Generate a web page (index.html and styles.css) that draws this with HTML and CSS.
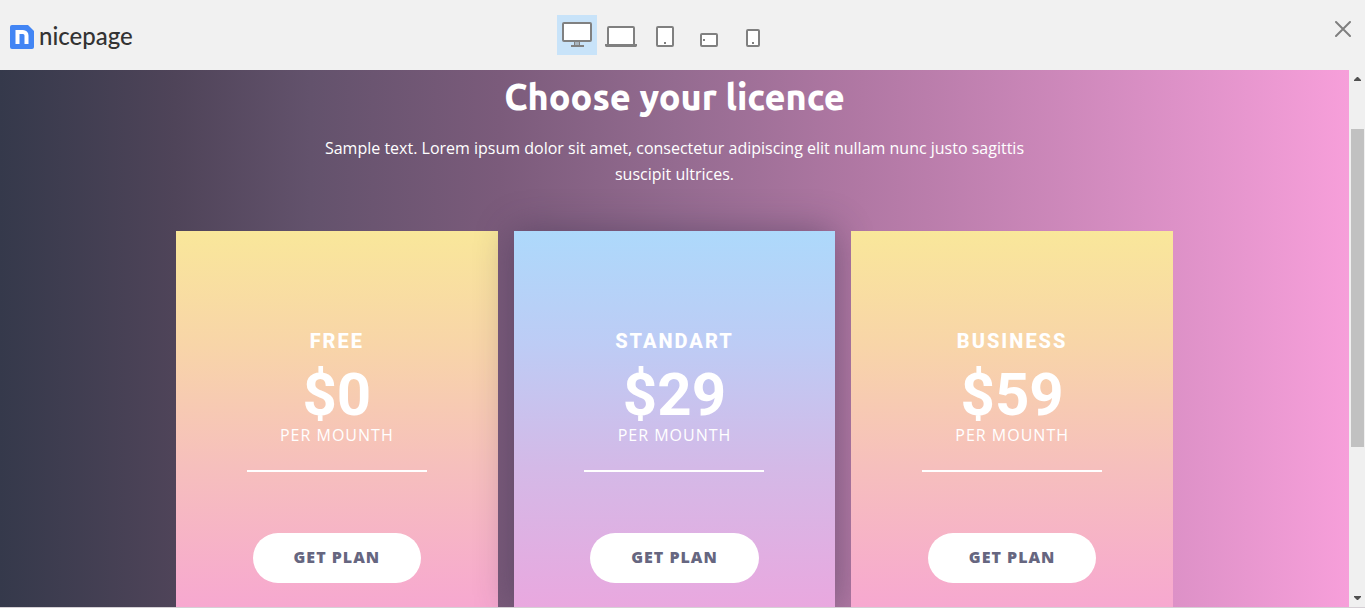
FILE: index.html
```html
<!DOCTYPE html>
<html lang="en">
<head>
<meta charset="utf-8">
<meta name="viewport" content="width=device-width, initial-scale=1">
<title>Nicepage preview</title>
<link rel="stylesheet" href="styles.css">
</head>
<body>
<header class="toolbar">
  <a class="logo" href="#">
    <svg class="logo-mark" width="24" height="24" viewBox="0 0 24 24" aria-hidden="true">
      <path fill="#4285f4" d="M2 0h16l6 6v16a2 2 0 0 1-2 2H2a2 2 0 0 1-2-2V2a2 2 0 0 1 2-2z"/>
      <path fill="none" stroke="#fff" stroke-width="4" d="M7.500 19V6.500M5.500 7H13a3.500 3.500 0 0 1 3.500 3.500V19"/>
    </svg>
    <span class="logo-text">nicepage</span>
  </a>
  <nav class="devices" aria-label="Preview size">
    <button class="device active" type="button" aria-label="Desktop">
      <svg width="40" height="40" viewBox="0 0 40 40"><rect x="6" y="8" width="28" height="18" rx="1" fill="#fff" stroke="#808080" stroke-width="2"/><path fill="#a8b5c0" d="M17 27h6v4h-6z"/><path fill="#808080" d="M17 27h1v3h4v-3h1v3h4v2H14v-2h3z"/></svg>
    </button>
    <button class="device" type="button" aria-label="Laptop">
      <svg width="40" height="40" viewBox="0 0 40 40"><rect x="7" y="12" width="26" height="18" rx="1" fill="#fff" stroke="#808080" stroke-width="2"/><path fill="#808080" d="M4 29h32v2l-1 1H5l-1-1z"/></svg>
    </button>
    <button class="device" type="button" aria-label="Tablet portrait">
      <svg width="40" height="40" viewBox="0 0 40 40"><rect x="12" y="12" width="16" height="19" rx="1" fill="#fff" stroke="#808080" stroke-width="2"/><path fill="#808080" d="M19 27h2v2h-2z"/></svg>
    </button>
    <button class="device" type="button" aria-label="Phone landscape">
      <svg width="40" height="40" viewBox="0 0 40 40"><rect x="12" y="19" width="16" height="12" rx="1" fill="#fff" stroke="#808080" stroke-width="2"/><path fill="#808080" d="M14 24h2v2h-2z"/></svg>
    </button>
    <button class="device" type="button" aria-label="Phone portrait">
      <svg width="40" height="40" viewBox="0 0 40 40"><rect x="14" y="15" width="12" height="16" rx="1" fill="#fff" stroke="#808080" stroke-width="2"/><path fill="#808080" d="M19 27h2v2h-2z"/></svg>
    </button>
  </nav>
  <button class="close" type="button" aria-label="Close">
    <svg width="16" height="16" viewBox="0 0 16 16"><path d="M1 1l14 14M15 1L1 15" stroke="#808080" stroke-width="2" stroke-linecap="round"/></svg>
  </button>
</header>
<div class="preview">
  <main class="page">
    <h1 class="title">Choose your licence</h1>
    <p class="intro">Sample text. Lorem ipsum dolor sit amet, consectetur adipiscing elit nullam nunc justo sagittis suscipit ultrices.</p>
    <div class="plans">
      <section class="plan">
        <h2 class="plan-name">FREE</h2>
        <p class="price">$0</p>
        <p class="period">PER MOUNTH</p>
        <hr class="rule">
        <a class="get" href="#">GET PLAN</a>
      </section>
      <section class="plan featured">
        <h2 class="plan-name">STANDART</h2>
        <p class="price">$29</p>
        <p class="period">PER MOUNTH</p>
        <hr class="rule">
        <a class="get" href="#">GET PLAN</a>
      </section>
      <section class="plan">
        <h2 class="plan-name">BUSINESS</h2>
        <p class="price">$59</p>
        <p class="period">PER MOUNTH</p>
        <hr class="rule">
        <a class="get" href="#">GET PLAN</a>
      </section>
    </div>
  </main>
  <div class="scrollbar" aria-hidden="true">
    <svg width="7" height="4" viewBox="0 0 7 4"><path fill="#505050" d="M3 0h1l3 3v1H0V3z"/></svg>
    <div class="track"><div class="thumb"></div></div>
    <svg width="7" height="4" viewBox="0 0 7 4"><path fill="#505050" d="M0 0h7v1L4 4H3L0 1z"/></svg>
  </div>
</div>
</body>
</html>
```
FILE: styles.css
```css
* { box-sizing: border-box; }
body {
  margin: 0;
  height: 100vh;
  display: flex;
  flex-direction: column;
  overflow: hidden;
  background: #f1f1f1;
  font-family: "Open Sans", sans-serif;
  font-size: 16px;
}
h1, h2, p { margin: 0; }
button { border: 0; padding: 0; background: none; cursor: pointer; }
svg { display: block; }

.toolbar {
  flex: none;
  display: grid;
  grid-template-columns: 1fr auto 1fr;
  align-items: center;
  height: 70px;
  padding: 0 14px 0 10px;
}
.logo {
  display: flex;
  align-items: center;
  gap: 5px;
  padding-top: 4px;
  color: #333;
  text-decoration: none;
}
.logo-text {
  padding-bottom: 2px;
  font: 500 24px/26px Lato, sans-serif;
}
.devices { display: flex; gap: 4px; margin-right: 31px; }
.device { width: 40px; height: 40px; }
.device.active { background: #c8e3f9; }
.close { justify-self: end; padding-bottom: 12px; }

.preview {
  flex: 1;
  min-height: 0;
  display: flex;
  border-bottom: 1px solid #d5d0d5;
}
.page {
  flex: 1;
  display: flex;
  flex-direction: column;
  align-items: center;
  padding-top: 6px;
  overflow: hidden;
  color: #fff;
  text-align: center;
  background: linear-gradient(90deg, #35394b 0%, #4f4459 13%, #63526c 23%, #7b5b7b 37%, #946b90 50%, #b178a4 64%, #dd91c7 87%, #f79fda 100%);
}
.title {
  font: 800 36px/42px Ubuntu, "Noto Sans", sans-serif;
}
.intro {
  max-width: 732px;
  margin-top: 17px;
  line-height: 26px;
}
.plans {
  flex: 1;
  display: grid;
  grid-template-columns: repeat(3, 1fr);
  gap: 16px;
  width: 100%;
  max-width: 997px;
  margin-top: 44px;
}
.plan {
  position: relative;
  display: flex;
  flex-direction: column;
  align-items: center;
  padding-top: 98px;
  background: linear-gradient(#f9e79a, #f8d5a8 30%, #f6bfbd 63%, #f7a8d0);
}
.featured {
  background: linear-gradient(#add9fb, #bdccf5 30%, #d4b9e7 63%, #e9a8df);
  box-shadow: 0 0 35px rgba(50, 45, 70, 0.45);
}
.plan-name {
  font: 800 20px/24px Roboto, sans-serif;
  letter-spacing: 2px;
}
.price {
  margin-top: 12px;
  font: 700 60px/60px Roboto, sans-serif;
}
.period {
  line-height: 20px;
  letter-spacing: 1px;
}
.rule {
  width: 180px;
  height: 2px;
  margin: 25px 0 61px;
  border: 0;
  background: #fff;
}
.get {
  padding: 0 41px 2px;
  border-radius: 25px;
  background: #fff;
  color: #666680;
  font-weight: 800;
  line-height: 48px;
  letter-spacing: 1px;
  text-decoration: none;
}

.scrollbar {
  flex: none;
  width: 16px;
  display: flex;
  flex-direction: column;
  align-items: center;
  padding: 7px 0;
  background: #f0f0f0;
}
.track {
  flex: 1;
  align-self: stretch;
  display: flex;
  flex-direction: column;
  padding: 48px 1px 0 2px;
}
.thumb { height: 68%; background: #c1c1c1; }
```
